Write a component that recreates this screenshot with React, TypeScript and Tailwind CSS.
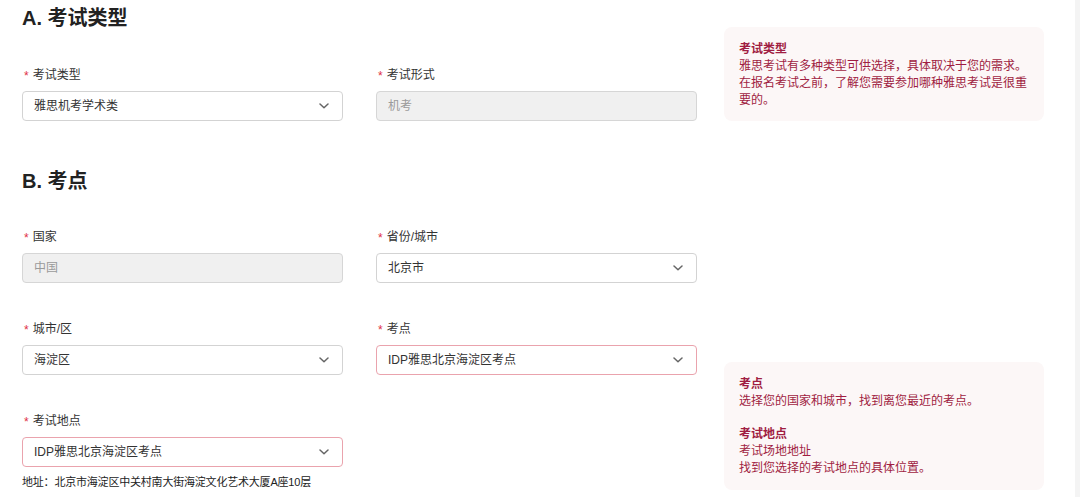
import React from 'react';

const Chevron = () => (
  <svg width="10" height="6" viewBox="0 0 10 6" fill="none" className="shrink-0 mr-[2px]">
    <path d="M1 1l4 3.8L9 1" stroke="#666" strokeWidth="1.5" strokeLinecap="round" strokeLinejoin="round" />
  </svg>
);

type FieldProps = {
  label: string;
  value: string;
  disabled?: boolean;
  highlight?: boolean;
};

const Field: React.FC<FieldProps> = ({ label, value, disabled, highlight }) => (
  <div className="flex flex-col">
    <label className="flex items-center h-5 text-[12px] leading-5 text-[#333]">
      <span className="text-[#e02f46] text-[12px] mr-[4px] ml-[2px] mt-[2px]">*</span>
      {label}
    </label>
    <div
      className={`mt-[6px] h-[30px] rounded-[4px] border flex items-center justify-between pl-[11px] pr-[11px] text-[12px]
        ${disabled ? 'bg-[#f0f0f0] border-[#d6d6d6] text-[#9a9a9a]' : 'bg-white text-[#333]'}
        ${highlight ? 'border-[#eaa3ad]' : ''}
        ${!disabled && !highlight ? 'border-[#d3d3d3]' : ''}
      `}
    >
      <span>{value}</span>
      {!disabled && <Chevron />}
    </div>
  </div>
);

const Info: React.FC<{ children: React.ReactNode; className?: string }> = ({ children, className }) => (
  <div className={`w-[320px] rounded-[8px] bg-[#fcf7f7] px-[15px] pt-[14px] text-[12px] leading-[17px] text-[#a01d42] ${className ?? ''}`}>
    {children}
  </div>
);

export default function App() {
  return (
    <div
      className="flex w-[1080px] h-[497px] overflow-hidden bg-white"
      style={{ fontFamily: '"Liberation Sans", "Noto Sans CJK SC", sans-serif' }}
    >
      <div className="flex-1 pl-[22px]">
        {/* Section A */}
        <div className="flex items-start">
          <div className="w-[675px]">
            <h2 className="mt-[4px] h-[28px] text-[20px] leading-[28px] font-bold text-[#222]">A. 考试类型</h2>
            <div className="mt-[33px] grid grid-cols-[321px_321px] gap-x-[33px]">
              <Field label="考试类型" value="雅思机考学术类" />
              <Field label="考试形式" value="机考" disabled />
            </div>
          </div>
          <Info className="ml-[27px] mt-[27px] h-[94px]">
            <div className="font-bold">考试类型</div>
            <div>雅思考试有多种类型可供选择，具体取决于您的需求。在报名考试之前，了解您需要参加哪种雅思考试是很重要的。</div>
          </Info>
        </div>

        {/* Section B */}
        <div className="flex items-end mt-[46px]">
          <div className="w-[675px]">
            <h2 className="h-[28px] text-[20px] leading-[28px] font-bold text-[#222]">B. 考点</h2>
            <div className="mt-[32px] grid grid-cols-[321px_321px] gap-x-[33px] gap-y-[36px]">
              <Field label="国家" value="中国" disabled />
              <Field label="省份/城市" value="北京市" />
              <Field label="城市/区" value="海淀区" />
              <Field label="考点" value="IDP雅思北京海淀区考点" highlight />
            </div>
            <div className="mt-[36px] w-[321px]">
              <Field label="考试地点" value="IDP雅思北京海淀区考点" highlight />
            </div>
            <p className="mt-[5px] h-5 text-[11px] leading-5 tracking-[-0.2px] text-[#222]">地址：北京市海淀区中关村南大街海淀文化艺术大厦A座10层</p>
          </div>
          <Info className="ml-[27px] mb-[2px] h-[128px]">
            <div className="font-bold">考点</div>
            <div>选择您的国家和城市，找到离您最近的考点。</div>
            <div className="h-[16px]" />
            <div className="font-bold">考试地点</div>
            <div>考试场地地址</div>
            <div>找到您选择的考试地点的具体位置。</div>
          </Info>
        </div>
      </div>
      <div className="w-[5px] bg-[#f4f4f4]" />
    </div>
  );
}
